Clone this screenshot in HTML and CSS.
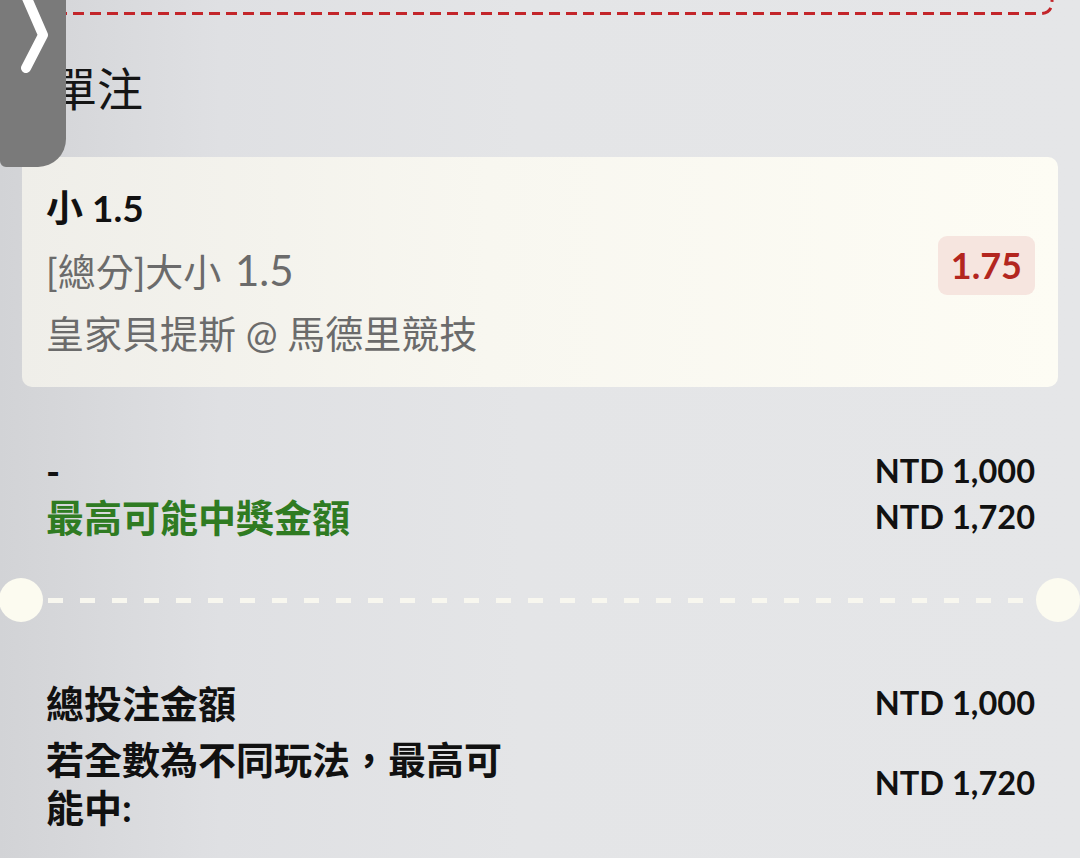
FILE: index.html
```html
<!DOCTYPE html>
<html lang="zh-Hant">
<head>
<meta charset="utf-8">
<title>單注</title>
<link rel="stylesheet" href="styles.css">
</head>
<body>
<div class="page">
  <div class="prev-box">
    <svg class="prev-svg" width="1034" height="16" viewBox="0 0 1034 16">
      <path d="M0 13.5 H1018 Q1030 13.5 1030 1.5 V-20" fill="none" stroke="#c3252a" stroke-width="3" stroke-dasharray="11 6"/>
    </svg>
  </div>

  <h1 class="title">單注</h1>

  <div class="bet-card">
    <div class="bet-info">
      <div class="bet-pick">小 1.5</div>
      <div class="bet-market">[總分]大小 <span class="lat">1.5</span></div>
      <div class="bet-match">皇家貝提斯 @ 馬德里競技</div>
    </div>
    <div class="odds">1.75</div>
  </div>

  <div class="summary">
    <div class="sum-label">-</div>
    <div class="sum-value">NTD 1,000</div>
    <div class="sum-label green">最高可能中獎金額</div>
    <div class="sum-value">NTD 1,720</div>
  </div>

  <div class="perforation">
    <span class="notch"></span>
    <span class="dashes"></span>
    <span class="notch"></span>
  </div>

  <div class="totals">
    <div class="total-row">
      <div class="total-label">總投注金額</div>
      <div class="total-value">NTD 1,000</div>
    </div>
    <div class="total-row">
      <div class="total-label">若全數為不同玩法，最高可能中:</div>
      <div class="total-value">NTD 1,720</div>
    </div>
  </div>

  <div class="side-tab">
    <svg width="66" height="80" viewBox="0 0 66 80">
      <path d="M26 -4 L43 35 L26 68" fill="none" stroke="#ffffff" stroke-width="10" stroke-linecap="round" stroke-linejoin="round"/>
    </svg>
  </div>
</div>
</body>
</html>
```
FILE: styles.css
```css
* { box-sizing: border-box; }

html, body {
  margin: 0;
  padding: 0;
}

body {
  width: 1080px;
  height: 858px;
  overflow: hidden;
  font-family: "Lato", "Noto Sans CJK TC", sans-serif;
  color: #141414;
  background: linear-gradient(90deg, #d2d3d6 0px, #dfe0e3 220px, #e4e5e7 520px, #e5e6e8 100%);
}

.page {
  position: relative;
  width: 1080px;
  height: 858px;
}

.prev-box {
  height: 16px;
  margin: 0 24px 0 22px;
}

.prev-svg {
  display: block;
  overflow: visible;
}

.title {
  margin: 43px 0 0 0;
  padding-left: 51px;
  font-size: 46px;
  line-height: 60px;
  font-weight: 400;
  color: #151515;
}

.bet-card {
  margin: 38px 22px 0 22px;
  height: 230px;
  padding: 20px 23px 24px 24px;
  border-radius: 10px;
  background: linear-gradient(90deg, #efeee9 0%, #f8f7f0 45%, #fdfcf4 100%);
  display: flex;
  align-items: center;
  justify-content: space-between;
}

.bet-info {
  display: flex;
  flex-direction: column;
  align-self: flex-start;
}

.bet-pick {
  font-size: 37px;
  line-height: 62px;
  font-weight: 700;
  color: #111;
}

.bet-market,
.bet-match {
  font-size: 38px;
  line-height: 62px;
  font-weight: 400;
  color: #6b6b6b;
}

.bet-market .lat {
  font-size: 42px;
  margin-left: 4px;
}

.odds {
  height: 59px;
  line-height: 59px;
  padding: 0 13px;
  margin-top: -10px;
  border-radius: 9px;
  background: #f6e5df;
  color: #b3261f;
  font-size: 36px;
  font-weight: 700;
}

.summary {
  margin: 61px 45px 0 46px;
  display: grid;
  grid-template-columns: 1fr auto;
}

.sum-label {
  font-size: 38px;
  line-height: 46px;
  font-weight: 700;
  color: #111;
}

.sum-label.green {
  color: #2f7b22;
}

.sum-value {
  font-size: 32.5px;
  line-height: 46px;
  font-weight: 700;
  color: #111;
  text-align: right;
}

.perforation {
  margin-top: 38px;
  height: 44px;
  display: flex;
  align-items: center;
}

.notch {
  width: 44px;
  height: 44px;
  border-radius: 50%;
  background: #fcfbf0;
  flex: 0 0 44px;
}

.notch:first-child { margin-left: -1px; }

.dashes {
  flex: 1;
  height: 5px;
  margin: 0 6px 0 5px;
  background: repeating-linear-gradient(90deg, #f8f7ef 0 15px, transparent 15px 32px);
}

.totals {
  margin: 57px 45px 0 46px;
  display: flex;
  flex-direction: column;
  gap: 8px;
}

.total-row {
  display: flex;
  align-items: center;
  justify-content: space-between;
}

.total-label {
  flex: 0 0 480px;
  font-size: 38px;
  line-height: 48px;
  font-weight: 700;
  color: #111;
}

.total-value {
  font-size: 32.5px;
  line-height: 48px;
  font-weight: 700;
  color: #111;
  text-align: right;
}

.side-tab {
  position: absolute;
  left: 0;
  top: 0;
  width: 66px;
  height: 167px;
  background: #7a7a7a;
  border-bottom-right-radius: 28px;
  border-bottom-left-radius: 6px;
}

.side-tab svg {
  display: block;
}
```
